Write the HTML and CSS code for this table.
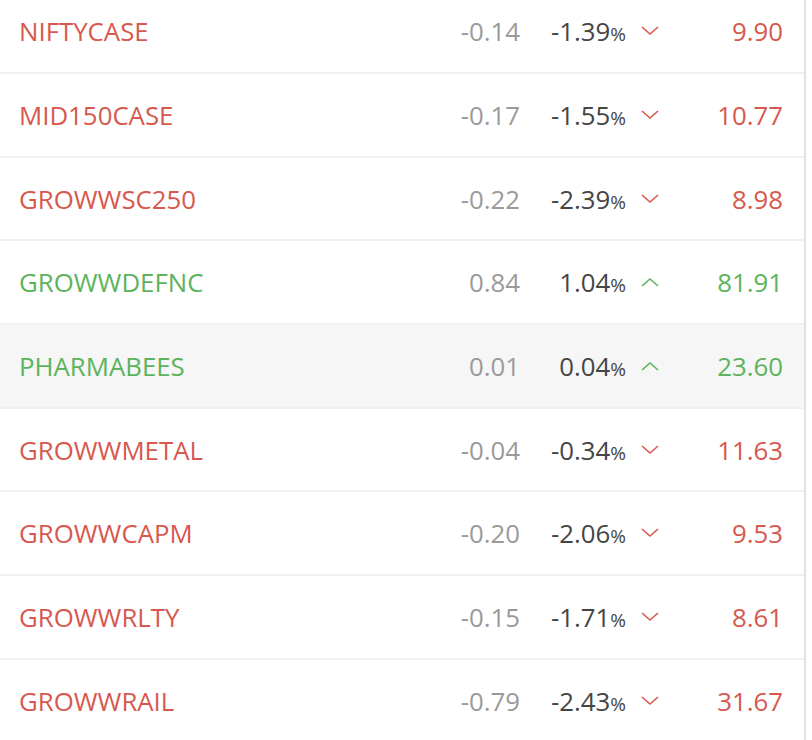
FILE: index.html
```html
<!DOCTYPE html>
<html>
<head>
<meta charset="utf-8">
<link rel="stylesheet" href="styles.css">
</head>
<body>
<div class="panel">
  <div class="list">
    <div class="row down"><span class="name">NIFTYCASE</span><span class="chg">-0.14</span><span class="pct">-1.39<small>%</small></span><span class="arrow"><svg viewBox="0 0 20 12"><path d="M2 2 L10 9 L18 2"/></svg></span><span class="price">9.90</span></div>
    <div class="row down"><span class="name">MID150CASE</span><span class="chg">-0.17</span><span class="pct">-1.55<small>%</small></span><span class="arrow"><svg viewBox="0 0 20 12"><path d="M2 2 L10 9 L18 2"/></svg></span><span class="price">10.77</span></div>
    <div class="row down"><span class="name">GROWWSC250</span><span class="chg">-0.22</span><span class="pct">-2.39<small>%</small></span><span class="arrow"><svg viewBox="0 0 20 12"><path d="M2 2 L10 9 L18 2"/></svg></span><span class="price">8.98</span></div>
    <div class="row up"><span class="name">GROWWDEFNC</span><span class="chg">0.84</span><span class="pct">1.04<small>%</small></span><span class="arrow"><svg viewBox="0 0 20 12"><path d="M2 10 L10 3 L18 10"/></svg></span><span class="price">81.91</span></div>
    <div class="row up active"><span class="name">PHARMABEES</span><span class="chg">0.01</span><span class="pct">0.04<small>%</small></span><span class="arrow"><svg viewBox="0 0 20 12"><path d="M2 10 L10 3 L18 10"/></svg></span><span class="price">23.60</span></div>
    <div class="row down"><span class="name">GROWWMETAL</span><span class="chg">-0.04</span><span class="pct">-0.34<small>%</small></span><span class="arrow"><svg viewBox="0 0 20 12"><path d="M2 2 L10 9 L18 2"/></svg></span><span class="price">11.63</span></div>
    <div class="row down"><span class="name">GROWWCAPM</span><span class="chg">-0.20</span><span class="pct">-2.06<small>%</small></span><span class="arrow"><svg viewBox="0 0 20 12"><path d="M2 2 L10 9 L18 2"/></svg></span><span class="price">9.53</span></div>
    <div class="row down"><span class="name">GROWWRLTY</span><span class="chg">-0.15</span><span class="pct">-1.71<small>%</small></span><span class="arrow"><svg viewBox="0 0 20 12"><path d="M2 2 L10 9 L18 2"/></svg></span><span class="price">8.61</span></div>
    <div class="row down"><span class="name">GROWWRAIL</span><span class="chg">-0.79</span><span class="pct">-2.43<small>%</small></span><span class="arrow"><svg viewBox="0 0 20 12"><path d="M2 2 L10 9 L18 2"/></svg></span><span class="price">31.67</span></div>
  </div>
</div>
</body>
</html>
```
FILE: styles.css
```css
html, body {
  margin: 0;
  padding: 0;
  background: #fff;
  overflow: hidden;
}
body {
  font-family: "Open Sans", "Noto Sans", sans-serif;
}
.panel {
  width: 804px;
  height: 740px;
  border-right: 2px solid #e2e2e2;
  overflow: hidden;
}
.list {
  margin-top: -9.7px;
}
.row {
  box-sizing: border-box;
  height: 83.7px;
  border-bottom: 2px solid #f0f0f0;
  display: flex;
  align-items: center;
  padding: 0 21px 0 19px;
  font-size: 25.8px;
}
.row.active {
  background: #f6f6f6;
}
.down .name, .down .price { color: #d6584e; }
.up .name, .up .price { color: #5cb35c; }
.down .arrow path { stroke: #d6584e; }
.up .arrow path { stroke: #5cb35c; }
.name {
  flex: 1;
}
.chg {
  width: 100px;
  text-align: right;
  color: #9a9a9a;
}
.pct {
  width: 106px;
  text-align: right;
  color: #454545;
}
.pct small {
  font-size: 19px;
}
.arrow {
  width: 34px;
  display: flex;
  justify-content: flex-end;
}
.arrow svg {
  width: 20px;
  height: 12px;
  fill: none;
  stroke-width: 1.6;
}
.price {
  width: 123px;
  text-align: right;
}
```
